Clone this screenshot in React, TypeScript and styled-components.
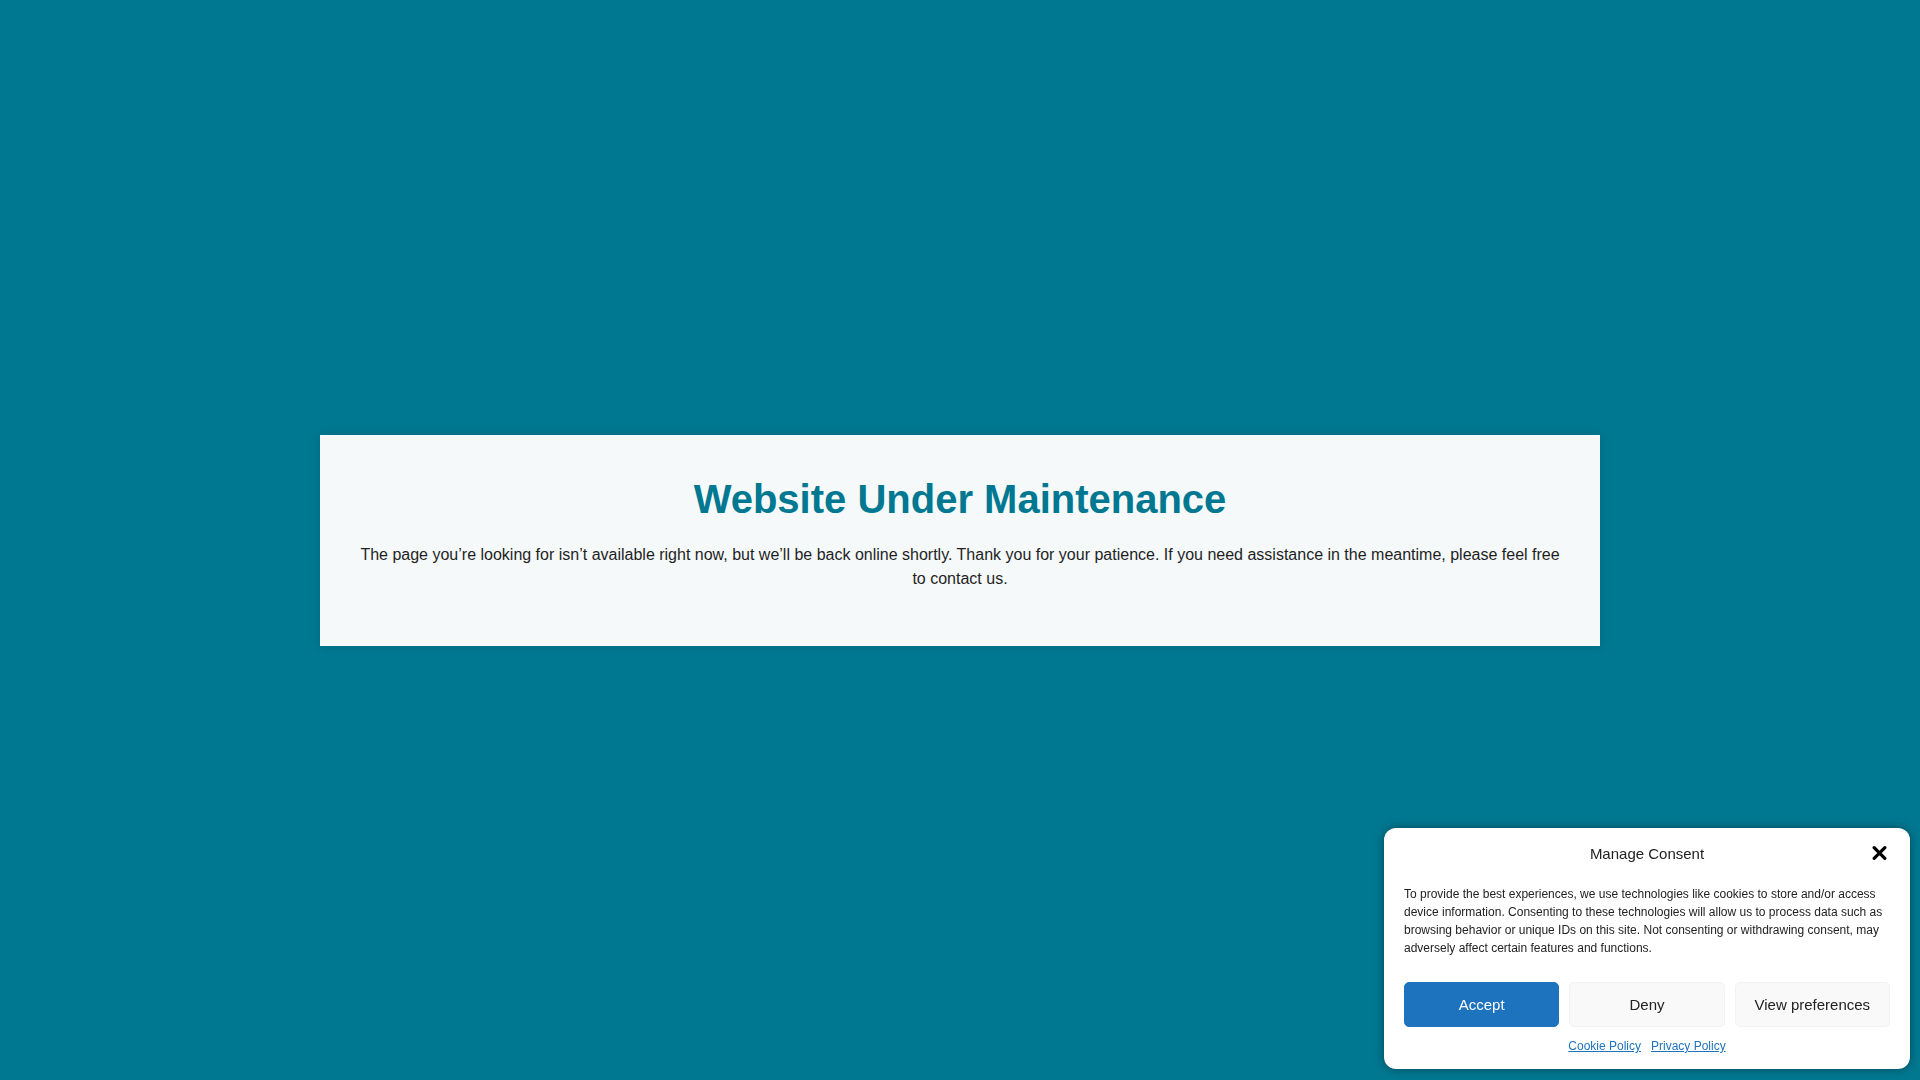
import React from "react";
import styled, { createGlobalStyle } from "styled-components";

const GlobalStyle = createGlobalStyle`
  html, body {
    margin: 0;
    padding: 0;
    height: 100%;
  }
  body {
    background: #007891;
    font-family: "Liberation Sans", Arial, sans-serif;
  }
`;

const Page = styled.main`
  min-height: 100vh;
  display: flex;
  align-items: center;
  justify-content: center;
  background: #007891;
`;

const Card = styled.section`
  width: 1280px;
  box-sizing: border-box;
  padding: 40px 40px 55px;
  background: #f5f9fa;
  box-shadow: 0 0 10px rgba(0, 0, 0, 0.12);
  text-align: center;
`;

const Title = styled.h1`
  margin: 0 0 20px;
  font-size: 40px;
  line-height: 48px;
  font-weight: 700;
  color: #007891;
`;

const Text = styled.p`
  margin: 0;
  font-size: 16px;
  line-height: 24px;
  color: #1f1f1f;
`;

// consent banner sits over the page, bottom right
const Consent = styled.div`
  position: fixed;
  right: 10px;
  bottom: 11px;
  width: 526px;
  box-sizing: border-box;
  padding: 9px 20px 14px;
  background: #fff;
  border-radius: 12px;
  box-shadow: 0 0 10px rgba(0, 0, 0, 0.4);
  display: flex;
  flex-direction: column;
  color: #222;
`;

const Header = styled.div`
  height: 32px;
  display: flex;
  align-items: center;
  justify-content: center;
  position: relative;
`;

const ConsentTitle = styled.div`
  font-size: 15px;
`;

const Close = styled.button`
  position: absolute;
  right: 3px;
  top: 50%;
  transform: translateY(-50%);
  padding: 0;
  border: 0;
  background: none;
  display: flex;
  cursor: pointer;
`;

const Message = styled.p`
  margin: 16px 0 0;
  font-size: 12px;
  line-height: 18px;
  color: #222;
`;

const Buttons = styled.div`
  margin-top: 25px;
  display: grid;
  grid-template-columns: repeat(3, 1fr);
  gap: 10px;
`;

const Btn = styled.button<{ $primary?: boolean }>`
  height: 45px;
  box-sizing: border-box;
  border-radius: 5px;
  font-family: inherit;
  font-size: 15px;
  cursor: pointer;
  background: ${(p) => (p.$primary ? "#1e73be" : "#f9f9f9")};
  border: 1px solid ${(p) => (p.$primary ? "#1e73be" : "#f2f2f2")};
  color: ${(p) => (p.$primary ? "#fff" : "#222")};
`;

const Links = styled.div`
  margin-top: 10px;
  display: flex;
  justify-content: center;
  gap: 10px;
  font-size: 12px;
  line-height: 18px;
`;

const Link = styled.a`
  color: #1e73be;
  text-decoration: underline;
`;

export default function App() {
  return (
    <>
      <GlobalStyle />
      <Page>
        <Card>
          <Title>Website Under Maintenance</Title>
          <Text>
            The page you’re looking for isn’t available right now, but we’ll be back online
            shortly. Thank you for your patience. If you need assistance in the meantime, please
            feel free to contact us.
          </Text>
        </Card>
      </Page>

      <Consent>
        <Header>
          <ConsentTitle>Manage Consent</ConsentTitle>
          <Close aria-label="close">
            <svg width="15" height="15" viewBox="0 0 14 14">
              <path d="M2 2L12 12M12 2L2 12" stroke="#000" strokeWidth="3" strokeLinecap="round" />
            </svg>
          </Close>
        </Header>
        <Message>
          To provide the best experiences, we use technologies like cookies to store and/or access
          device information. Consenting to these technologies will allow us to process data such
          as browsing behavior or unique IDs on this site. Not consenting or withdrawing consent,
          may adversely affect certain features and functions.
        </Message>
        <Buttons>
          <Btn $primary>Accept</Btn>
          <Btn>Deny</Btn>
          <Btn>View preferences</Btn>
        </Buttons>
        <Links>
          <Link href="#">Cookie Policy</Link>
          <Link href="#">Privacy Policy</Link>
        </Links>
      </Consent>
    </>
  );
}
